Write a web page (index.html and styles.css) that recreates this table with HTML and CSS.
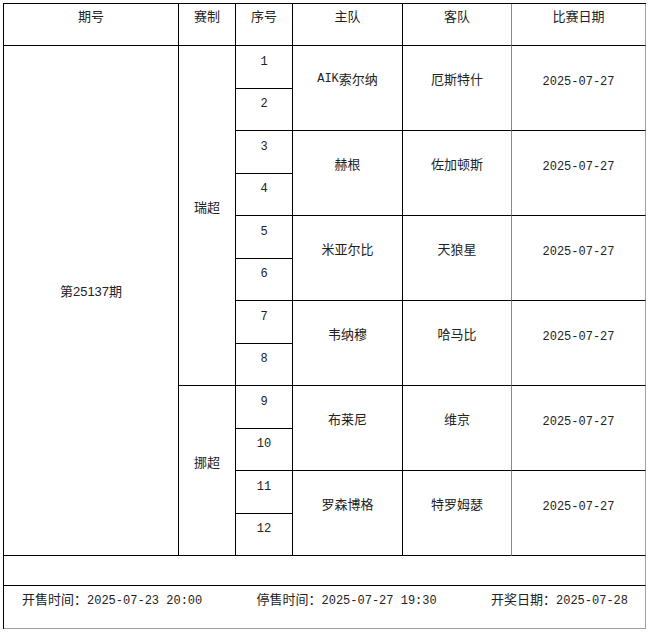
FILE: index.html
```html
<!DOCTYPE html>
<html lang="zh-CN">
<head>
<meta charset="utf-8">
<title>第25137期</title>
<link rel="stylesheet" href="styles.css">
</head>
<body>
<div class="sheet">
  <div class="cell">期号</div>
  <div class="cell">赛制</div>
  <div class="cell">序号</div>
  <div class="cell">主队</div>
  <div class="cell c5">客队</div>
  <div class="cell c6">比赛日期</div>

  <div class="cell span12 period">第25137期</div>
  <div class="cell span8">瑞超</div>
  <div class="cell sub num">1</div>
  <div class="cell span2"><span class="num">AIK</span>索尔纳</div>
  <div class="cell span2 c5">厄斯特什</div>
  <div class="cell span2 c6 date num">2025-07-27</div>
  <div class="cell sub num">2</div>

  <div class="cell sub num">3</div>
  <div class="cell span2">赫根</div>
  <div class="cell span2 c5">佐加顿斯</div>
  <div class="cell span2 c6 date num">2025-07-27</div>
  <div class="cell sub num">4</div>

  <div class="cell sub num">5</div>
  <div class="cell span2">米亚尔比</div>
  <div class="cell span2 c5">天狼星</div>
  <div class="cell span2 c6 date num">2025-07-27</div>
  <div class="cell sub num">6</div>

  <div class="cell sub num">7</div>
  <div class="cell span2">韦纳穆</div>
  <div class="cell span2 c5">哈马比</div>
  <div class="cell span2 c6 date num">2025-07-27</div>
  <div class="cell sub num">8</div>

  <div class="cell span4">挪超</div>
  <div class="cell sub num">9</div>
  <div class="cell span2">布莱尼</div>
  <div class="cell span2 c5">维京</div>
  <div class="cell span2 c6 date num">2025-07-27</div>
  <div class="cell sub num">10</div>

  <div class="cell sub num">11</div>
  <div class="cell span2">罗森博格</div>
  <div class="cell span2 c5">特罗姆瑟</div>
  <div class="cell span2 c6 date num">2025-07-27</div>
  <div class="cell sub num">12</div>

  <div class="cell full blank"></div>
  <div class="cell full footer">
    <span>开售时间：<span class="num">2025-07-23 20:00</span></span>
    <span>停售时间：<span class="num">2025-07-27 19:30</span></span>
    <span>开奖日期：<span class="num">2025-07-28</span></span>
  </div>
</div>
</body>
</html>
```

FILE: styles.css
```css
html, body {
  margin: 0;
  padding: 0;
  background: #fff;
}

body {
  font-family: "Noto Sans CJK SC", "Liberation Sans", sans-serif;
  font-size: 13px;
  color: #222;
}

.sheet {
  display: grid;
  grid-template-columns: 175px 57px 57px 110px 109px 134px;
  grid-template-rows: 42px repeat(6, 43px 42px) 30px 43px;
  width: max-content;
  margin: 3px;
  border-left: 1px solid #000;
  border-top: 1px solid #000;
}

.cell {
  box-sizing: border-box;
  display: flex;
  align-items: center;
  justify-content: center;
  border-right: 1px solid #000;
  border-bottom: 1px solid #000;
  padding-bottom: 17px;
  line-height: 16px;
  white-space: nowrap;
}

.sub {
  padding-bottom: 11px;
}

.c5 {
  border-right-color: #8a8a8a;
}

.c6 {
  border-right-color: #a0a0a0;
}

.span2 { grid-row: span 2; padding-bottom: 19px; }
.span4 { grid-row: span 4; }
.span8 { grid-row: span 8; }
.span12 { grid-row: span 12; }

.date {
  padding-bottom: 13px;
}

.num {
  font-family: "Liberation Mono", monospace;
  font-size: 12px;
}

.period {
  font-family: "Liberation Sans", "Noto Sans CJK SC", sans-serif;
  font-size: 13px;
}

.full {
  grid-column: 1 / -1;
  border-right-color: #a0a0a0;
}

.blank {
  padding: 0;
}

.footer {
  justify-content: space-between;
  padding: 0 17px 15px 18px;
  border-bottom-color: #a0a0a0;
}
```
